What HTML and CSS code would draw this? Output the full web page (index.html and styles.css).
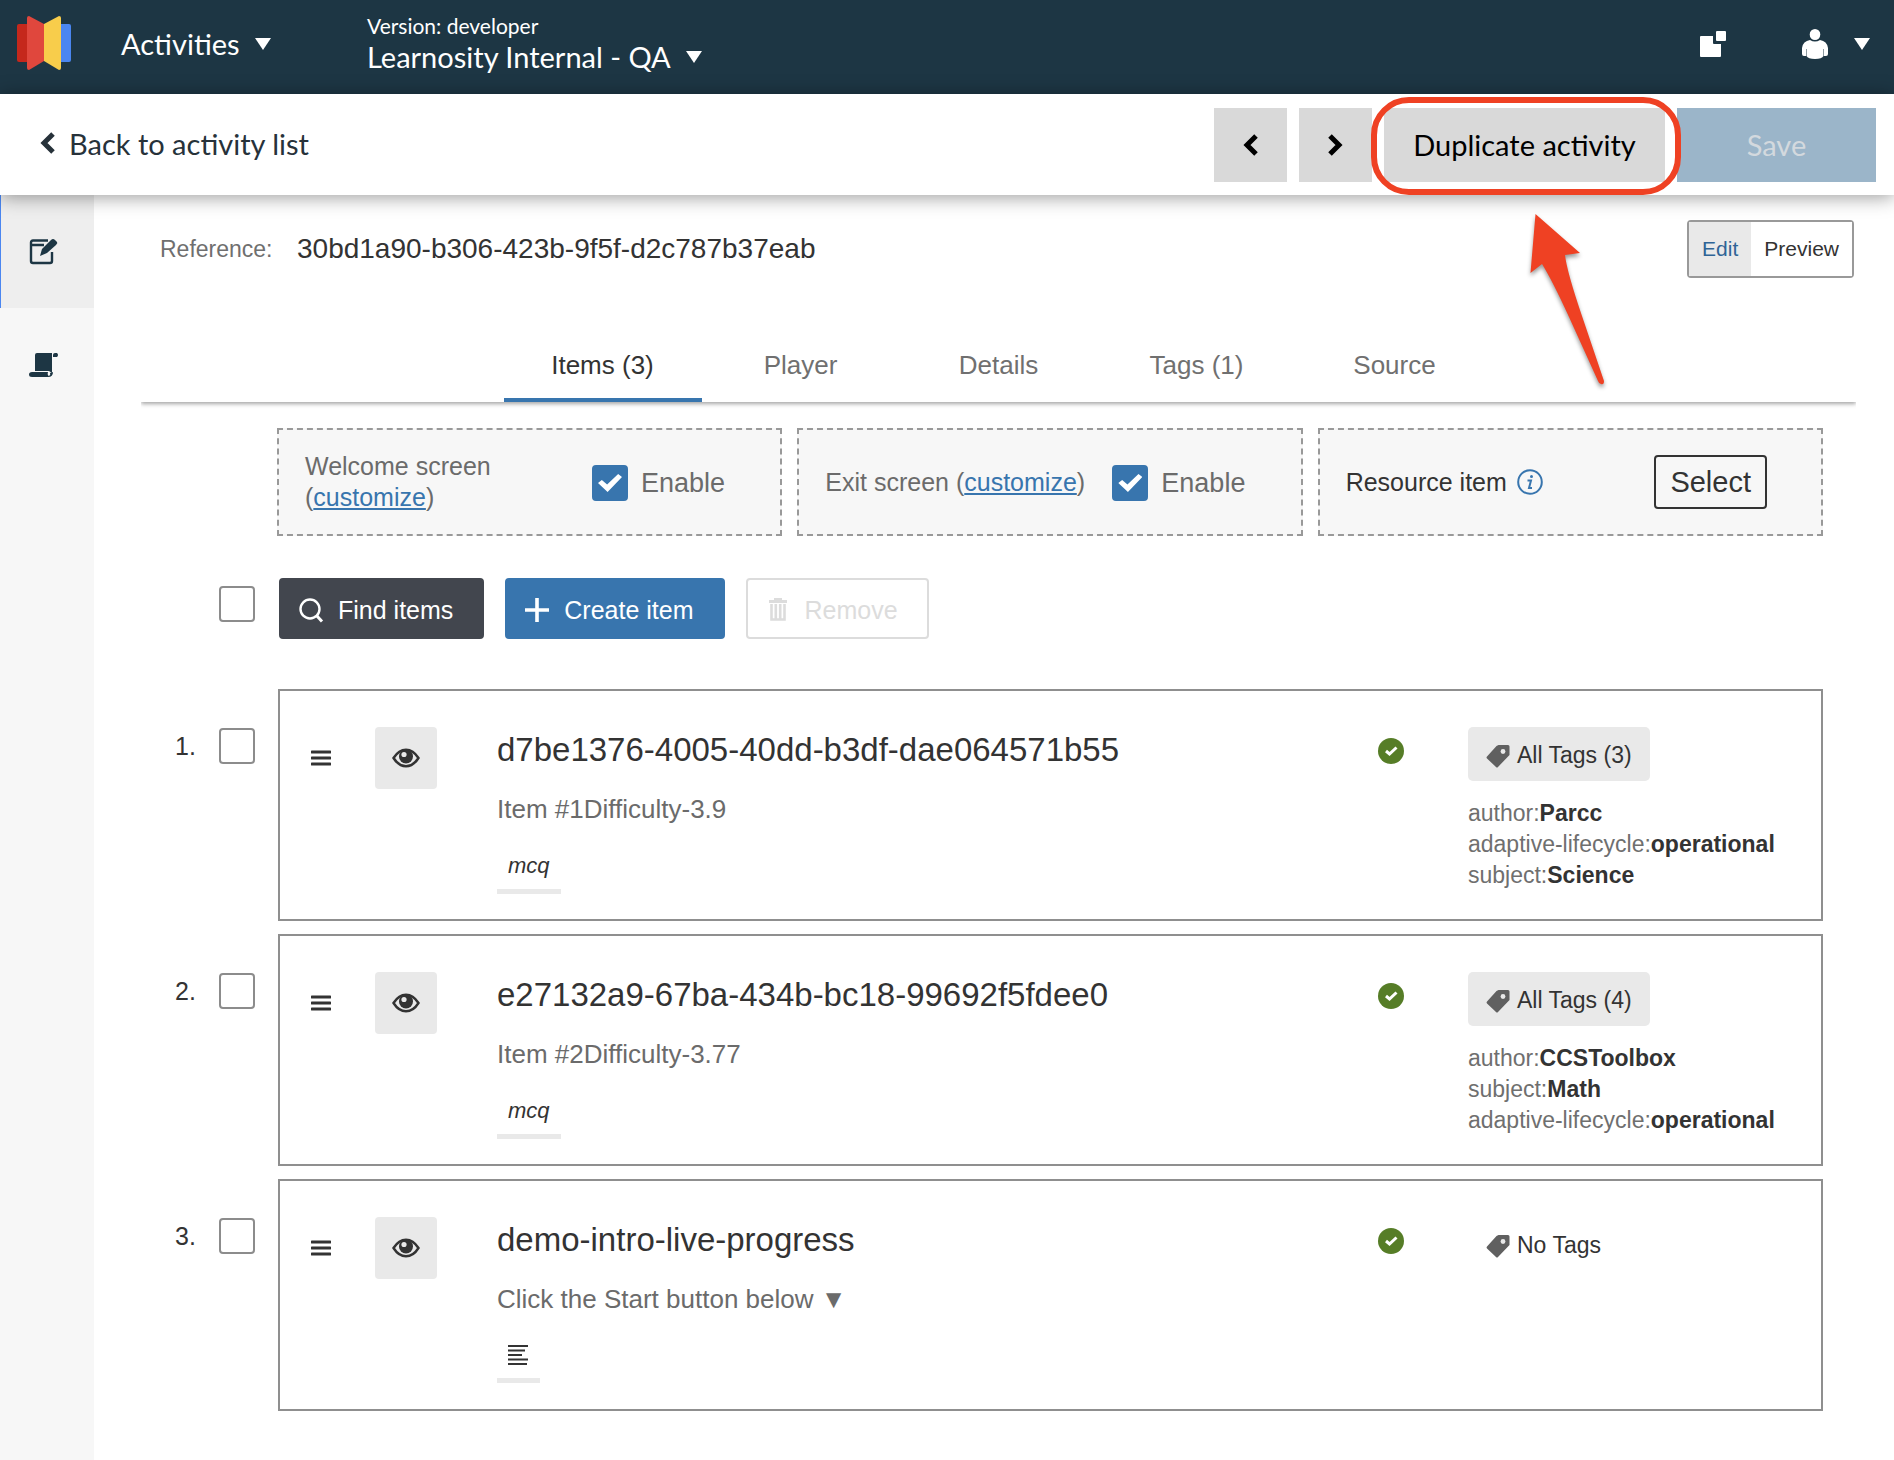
FILE: index.html
```html
<!DOCTYPE html>
<html lang="en">
<head>
  <meta charset="UTF-8">
  <title>Edit Activity</title>
  <link rel="stylesheet" href="styles.css">
</head>
<body>

  <!-- Shared icons -->
  <svg class="icon-defs" width="0" height="0">
    <symbol id="icon-eye" viewBox="0 0 28 20">
      <path d="M1.500 10C5 4.500 9 1.700 14 1.700S23 4.500 26.500 10C23 15.500 19 18.300 14 18.300S5 15.500 1.500 10Z" fill="none" stroke="#333" stroke-width="2.400"/>
      <circle cx="14" cy="8.500" r="7" fill="#333"/>
      <circle cx="12" cy="6.500" r="2.600" fill="#e9e9e9"/>
    </symbol>
    <symbol id="icon-tag" viewBox="0 0 24 24">
      <path d="M12.500 1H22Q23.500 1 23.500 2.500V11L12 23Q11 24 10 23L1 14.500Q0 13.500 1 12.500L10.500 2Z" fill="#606060"/>
      <circle cx="17" cy="7.500" r="2.400" fill="#e9e9e9"/>
    </symbol>
    <symbol id="icon-ok" viewBox="0 0 26 26">
      <circle cx="13" cy="13" r="13" fill="#567d27"/>
      <path d="M8 13L11.500 16L18.500 9.500" fill="none" stroke="#fff" stroke-width="3"/>
    </symbol>
    <symbol id="icon-drag" viewBox="0 0 20 16">
      <path d="M1 2H19M1 8H19M1 14H19" stroke="#333" stroke-width="3" stroke-linecap="round"/>
    </symbol>
    <symbol id="icon-caret" viewBox="0 0 16 12">
      <path d="M0 0H16L8 12Z" fill="#fff"/>
    </symbol>
  </svg>

  <header class="topbar">
    <svg class="logo" viewBox="0 0 54 54">
      <rect x="0" y="8" width="14" height="38" rx="2" fill="#c5281c"/>
      <rect x="40" y="8" width="14" height="38" rx="2" fill="#4a86f0"/>
      <path d="M10 2Q10 0 12 0L27 8V45L12 54Q10 54 10 52Z" fill="#e0473d"/>
      <path d="M44 2Q44 0 42 0L27 8V45L42 54Q44 54 44 52Z" fill="#f8cd4b"/>
    </svg>
    <button class="top-menu menu-section">Activities <svg class="caret"><use href="#icon-caret"/></svg></button>
    <div class="account">
      <span class="version">Version: developer</span>
      <button class="top-menu">Learnosity Internal - QA <svg class="caret"><use href="#icon-caret"/></svg></button>
    </div>
    <div class="top-right">
      <button class="top-menu" aria-label="Open">
        <svg width="26" height="26" viewBox="0 0 26 26" fill="#fff">
          <path d="M1 5H13V12Q13 13 14 13H21V25Q21 26 20 26H1Q0 26 0 25V6Q0 5 1 5Z"/>
          <rect x="16" y="0" width="10" height="10" rx="1"/>
        </svg>
      </button>
      <button class="top-menu" aria-label="User">
        <svg width="26" height="30" viewBox="0 0 26 30" fill="#fff">
          <ellipse cx="13" cy="5.500" rx="5.300" ry="5.500"/>
          <path d="M8 11Q13 14 18 11Q25 12 26 19V25Q26 27 24 27H22V20H21.500V27Q20 30 13 30T4.500 27V20H4V27H2Q0 27 0 25V19Q1 12 8 11Z"/>
        </svg>
        <svg class="caret"><use href="#icon-caret"/></svg>
      </button>
    </div>
  </header>

  <nav class="actionbar">
    <a href="#" class="back-link">
      <svg width="15" height="22" viewBox="0 0 15 22"><path d="M13 2L4 11L13 20" fill="none" stroke="#27323a" stroke-width="5"/></svg>
      Back to activity list
    </a>
    <div class="actions">
      <button class="action" aria-label="Previous"><svg width="15" height="22" viewBox="0 0 15 22"><path d="M13 2L4 11L13 20" fill="none" stroke="#000" stroke-width="5"/></svg></button>
      <button class="action" aria-label="Next"><svg width="15" height="22" viewBox="0 0 15 22"><path d="M2 2L11 11L2 20" fill="none" stroke="#000" stroke-width="5"/></svg></button>
      <div class="duplicate">
        <button class="action">Duplicate activity</button>
        <span class="ring"></span>
        <svg class="arrow" viewBox="0 0 80 180">
          <path d="M7.500 4L52 43L37 45Q39 62 54 106L76 171Q76 175 73 174Q71 174 70 171L41 107Q24 70 14 54L2.500 63Z" fill="#ef4123"/>
        </svg>
      </div>
      <button class="action save" disabled>Save</button>
    </div>
  </nav>

  <div class="layout">
    <aside class="sidebar">
      <a href="#" class="side-link active" aria-label="Edit">
        <svg width="30" height="28" viewBox="0 0 30 28">
          <path d="M19 2.500H4Q2 2.500 2 4.500V23Q2 25 4 25H21Q23 25 23 23V14M2 7H15" fill="none" stroke="#1d3644" stroke-width="2.400"/>
          <path d="M11 18L13 11L22 2Q24 0 26 2L28 4Q29 5 27 7L18 15Z" fill="#1d3644"/>
        </svg>
      </a>
      <a href="#" class="side-link" aria-label="History">
        <svg width="30" height="28" viewBox="0 0 30 28" fill="#1d3644">
          <path d="M8 2H23V22L20 20H6V4Q6 2 8 2Z"/>
          <path d="M3 21H19Q18 24 20 25Q22 24 21 22L24 21Q24 26 19 26H3Q0 26 0 23.500T3 21Z"/>
          <path d="M24 6V4Q24 2 26 2H28Q30 4 28 6Z"/>
        </svg>
      </a>
    </aside>

    <main class="content">
      <div class="reference-row">
        <span class="reference-label">Reference:</span>
        <span class="reference-value">30bd1a90-b306-423b-9f5f-d2c787b37eab</span>
        <div class="mode">
          <button class="active">Edit</button>
          <button>Preview</button>
        </div>
      </div>

      <nav class="tabs">
        <a href="#" class="tab active">Items (3)</a>
        <a href="#" class="tab">Player</a>
        <a href="#" class="tab">Details</a>
        <a href="#" class="tab">Tags (1)</a>
        <a href="#" class="tab">Source</a>
      </nav>

      <section class="panels">
        <div class="panel">
          <span class="panel-label">Welcome screen <span class="customize">(<a href="#">customize</a>)</span></span>
          <label class="enable"><input type="checkbox" class="checkbox" checked> Enable</label>
        </div>
        <div class="panel">
          <span class="panel-label">Exit screen <span class="customize">(<a href="#">customize</a>)</span></span>
          <label class="enable"><input type="checkbox" class="checkbox" checked> Enable</label>
        </div>
        <div class="panel resource">
          <span class="panel-label">Resource item
            <svg width="26" height="26" viewBox="0 0 26 26">
              <circle cx="13" cy="13" r="11.800" fill="none" stroke="#3875ae" stroke-width="2"/>
              <circle cx="14.500" cy="7.500" r="1.500" fill="#3875ae"/>
              <path d="M10.500 11.500H14L12 19H15" fill="none" stroke="#3875ae" stroke-width="2"/>
            </svg>
          </span>
          <button class="select-btn">Select</button>
        </div>
      </section>

      <div class="toolbar">
        <input type="checkbox" class="checkbox" aria-label="Select all items">
        <button class="btn dark">
          <svg width="26" height="26" viewBox="0 0 26 26" fill="none" stroke="#fff" stroke-width="2.400"><circle cx="12" cy="11" r="9.500"/><path d="M18.500 17.500L24 23.500" stroke-width="3"/></svg>
          Find items
        </button>
        <button class="btn blue">
          <svg width="26" height="26" viewBox="0 0 26 26" stroke="#fff" stroke-width="3.600"><path d="M13 0V24M1 12H25"/></svg>
          Create item
        </button>
        <button class="btn" disabled>
          <svg width="26" height="26" viewBox="0 0 26 26" fill="none" stroke="#dcdcdc"><path d="M4 3.500H22" stroke-width="3"/><path d="M10 2.500V1H16V2.500" stroke-width="2"/><path d="M6.500 6V21.500H19.500V6M10.800 6V21M15.200 6V21" stroke-width="2.600"/></svg>
          Remove
        </button>
      </div>

      <ul class="items">
        <li class="item">
          <span class="number">1.</span>
          <input type="checkbox" class="checkbox" aria-label="Select item 1">
          <article class="card">
            <svg class="drag"><use href="#icon-drag"/></svg>
            <button class="view" aria-label="View item"><svg width="28" height="20"><use href="#icon-eye"/></svg></button>
            <div class="info">
              <h2>d7be1376-4005-40dd-b3df-dae064571b55</h2>
              <p>Item #1Difficulty-3.9</p>
              <span class="type"><em>mcq</em></span>
            </div>
            <svg class="status"><use href="#icon-ok"/></svg>
            <div class="tags">
              <button class="all-tags"><svg width="24" height="24"><use href="#icon-tag"/></svg> All Tags (3)</button>
              <div>author:<b>Parcc</b></div>
              <div>adaptive-lifecycle:<b>operational</b></div>
              <div>subject:<b>Science</b></div>
            </div>
          </article>
        </li>
        <li class="item">
          <span class="number">2.</span>
          <input type="checkbox" class="checkbox" aria-label="Select item 2">
          <article class="card">
            <svg class="drag"><use href="#icon-drag"/></svg>
            <button class="view" aria-label="View item"><svg width="28" height="20"><use href="#icon-eye"/></svg></button>
            <div class="info">
              <h2>e27132a9-67ba-434b-bc18-99692f5fdee0</h2>
              <p>Item #2Difficulty-3.77</p>
              <span class="type"><em>mcq</em></span>
            </div>
            <svg class="status"><use href="#icon-ok"/></svg>
            <div class="tags">
              <button class="all-tags"><svg width="24" height="24"><use href="#icon-tag"/></svg> All Tags (4)</button>
              <div>author:<b>CCSToolbox</b></div>
              <div>subject:<b>Math</b></div>
              <div>adaptive-lifecycle:<b>operational</b></div>
            </div>
          </article>
        </li>
        <li class="item">
          <span class="number">3.</span>
          <input type="checkbox" class="checkbox" aria-label="Select item 3">
          <article class="card">
            <svg class="drag"><use href="#icon-drag"/></svg>
            <button class="view" aria-label="View item"><svg width="28" height="20"><use href="#icon-eye"/></svg></button>
            <div class="info">
              <h2>demo-intro-live-progress</h2>
              <p>Click the Start button below ▼</p>
              <span class="type">
                <svg width="21" height="22" viewBox="0 0 21 22" stroke="#333" stroke-width="2"><path d="M0 2H20M0 6.500H17M0 11H14M0 15.500H20M0 20H19"/></svg>
              </span>
            </div>
            <svg class="status"><use href="#icon-ok"/></svg>
            <div class="tags">
              <button class="all-tags empty"><svg width="24" height="24"><use href="#icon-tag"/></svg> No Tags</button>
            </div>
          </article>
        </li>
      </ul>
    </main>
  </div>

</body>
</html>
```
FILE: styles.css
```css
* {
  box-sizing: border-box;
}

body {
  margin: 0;
  background: #fff;
  color: #333;
  font-family: "Liberation Sans", "DejaVu Sans", Arial, sans-serif;
  font-size: 25px;
}

button {
  font: inherit;
  color: inherit;
  cursor: pointer;
}

a {
  color: #3875ae;
}

svg {
  flex-shrink: 0;
}

.icon-defs {
  position: absolute;
}

/* Top bar */
.topbar {
  display: flex;
  align-items: center;
  height: 94px;
  padding: 0 24px 0 17px;
  background: #1d3644;
  color: #fff;
  font-family: Lato, sans-serif;
}

.logo {
  width: 54px;
  height: 54px;
  margin-bottom: 8px;
}

.top-menu {
  display: flex;
  align-items: center;
  gap: 15px;
  padding: 0;
  border: none;
  background: none;
  font-size: 29px;
  line-height: 34px;
}

.menu-section {
  width: 246px;
  margin: 0 0 7px 50px;
}

.caret {
  width: 16px;
  height: 12px;
}

.account {
  padding-bottom: 9px;
}

.version {
  display: block;
  font-size: 21px;
  line-height: 28px;
}

.top-right {
  display: flex;
  align-items: center;
  gap: 76px;
  margin-left: auto;
  padding-bottom: 7px;
}

.top-right .top-menu {
  gap: 26px;
}

/* Action bar */
.actionbar {
  position: relative;
  z-index: 1;
  display: flex;
  justify-content: space-between;
  align-items: center;
  height: 101px;
  padding: 0 18px 0 40px;
  background: #fff;
  box-shadow: 0 2px 18px rgba(0, 0, 0, 0.4);
  font-family: Lato, sans-serif;
  font-size: 29px;
}

.back-link {
  display: flex;
  align-items: center;
  gap: 14px;
  padding-bottom: 3px;
  color: #27323a;
  text-decoration: none;
}

.actions {
  display: flex;
  gap: 12px;
}

.action {
  height: 74px;
  min-width: 73px;
  padding: 0 29px;
  border: none;
  background: #d9d9d9;
  color: #000;
}

.action.save {
  width: 199px;
  background: #9bb5c9;
  color: #d3d9de;
}

.duplicate {
  position: relative;
}

.duplicate .action {
  width: 281px;
}

.ring {
  position: absolute;
  inset: -11px -16px -13px -13px;
  border: 6px solid #ef4123;
  border-radius: 38px;
}

.arrow {
  position: absolute;
  left: 144px;
  top: 102px;
  width: 80px;
  height: 180px;
  filter: drop-shadow(0 3px 2px rgba(0, 0, 0, 0.4));
}

/* Page layout */
.layout {
  display: flex;
  min-height: calc(100vh - 195px);
}

.sidebar {
  width: 94px;
  flex-shrink: 0;
  background: #f7f7f7;
}

.side-link {
  display: flex;
  align-items: center;
  height: 113px;
  padding-left: 29px;
}

.side-link.active {
  background: #eee;
  box-shadow: inset 1px 0 #4a86f0;
}

.content {
  flex: 1;
  padding: 25px 38px 40px 47px;
}

.reference-row {
  display: flex;
  align-items: center;
  padding: 0 2px 0 19px;
}

.reference-label {
  width: 137px;
  color: #6f6f6f;
  font-size: 23px;
}

.reference-value {
  font-size: 28px;
}

.mode {
  display: flex;
  margin-left: auto;
  border: 2px solid #999;
  border-radius: 4px;
}

.mode button {
  height: 54px;
  padding: 0 13px;
  border: none;
  background: #fff;
  font-size: 21px;
}

.mode button.active {
  background: #e9e9e9;
  color: #2f6496;
}

/* Tabs */
.tabs {
  display: flex;
  justify-content: center;
  margin-top: 53px;
  box-shadow: 0 2px 4px rgba(0, 0, 0, 0.35);
  clip-path: inset(0 0 -8px 0);
}

.tab {
  width: 198px;
  height: 71px;
  border-bottom: 4px solid transparent;
  color: #707070;
  font-size: 26px;
  line-height: 68px;
  text-align: center;
  text-decoration: none;
}

.tab.active {
  border-color: #3875ae;
  color: #333;
}

/* Start, end and resource panels */
.panels {
  display: grid;
  grid-template-columns: repeat(3, 1fr);
  gap: 15px;
  margin: 26px 33px 0 136px;
}

.panel {
  display: flex;
  align-items: center;
  height: 108px;
  padding: 0 26px;
  border: 2px dashed #999;
  background: #f7f7f7;
  color: #6b6b6b;
}

.panel-label {
  width: 287px;
  line-height: 31px;
}

.customize {
  display: inline-block;
}

.enable {
  display: flex;
  align-items: center;
  gap: 13px;
  padding-top: 2px;
  font-size: 27px;
}

.panel.resource {
  justify-content: space-between;
  padding-right: 54px;
  color: #333;
}

.resource .panel-label {
  display: flex;
  align-items: center;
  gap: 10px;
}

.select-btn {
  height: 54px;
  padding: 0 14px;
  border: 2px solid #333;
  border-radius: 4px;
  background: none;
  font-size: 29px;
}

.checkbox {
  appearance: none;
  display: grid;
  place-items: center;
  flex-shrink: 0;
  width: 36px;
  height: 36px;
  margin: 0;
  border: 2px solid #8c8c8c;
  border-radius: 4px;
  background: #fff;
}

.checkbox:checked {
  border-color: #3875ae;
  background: #3875ae;
}

.checkbox:checked::before {
  content: "";
  width: 24px;
  height: 18px;
  background: #fff;
  clip-path: polygon(0 50%, 16% 34%, 38% 58%, 84% 0, 100% 16%, 40% 100%);
}

/* Toolbar */
.toolbar {
  display: flex;
  align-items: flex-start;
  margin: 42px 0 50px 78px;
}

.toolbar .checkbox {
  margin: 8px 24px 0 0;
}

.btn {
  display: flex;
  align-items: center;
  gap: 14px;
  height: 61px;
  margin-right: 21px;
  padding: 4px 29px 0 17px;
  border: 2px solid #dcdcdc;
  border-radius: 4px;
  background: #fff;
}

.btn:disabled {
  color: #dcdcdc;
  cursor: not-allowed;
}

.btn.dark {
  border-color: #42464e;
  background: #42464e;
  color: #fff;
}

.btn.blue {
  border-color: #3875ae;
  background: #3875ae;
  color: #fff;
}

/* Items */
.items {
  display: flex;
  flex-direction: column;
  gap: 13px;
  margin: 0;
  padding: 0 33px 0 34px;
  list-style: none;
}

.item {
  display: flex;
}

.number {
  width: 44px;
  padding-top: 42px;
  line-height: 30px;
}

.item > .checkbox {
  margin: 39px 23px 0 0;
}

.card {
  display: flex;
  align-items: flex-start;
  flex: 1;
  min-height: 232px;
  padding: 36px 0 0 31px;
  border: 2px solid #8f8f8f;
}

.drag {
  width: 20px;
  height: 16px;
  margin-top: 23px;
}

.view {
  display: grid;
  place-items: center;
  width: 62px;
  height: 62px;
  margin: 0 60px 0 44px;
  padding: 0;
  border: none;
  border-radius: 4px;
  background: #e9e9e9;
}

.info {
  flex: 1;
}

.info h2 {
  margin: 0;
  font-size: 33px;
  font-weight: normal;
  line-height: 46px;
}

.info p {
  margin: 21px 0 26px;
  color: #6b6b6b;
  font-size: 26px;
  line-height: 30px;
}

.type {
  display: inline-flex;
  align-items: center;
  height: 43px;
  padding: 0 11px 8px;
  border-bottom: 5px solid #e9e9e9;
  font-size: 22px;
}

.status {
  width: 26px;
  height: 26px;
  margin: 11px 64px 0 0;
}

.tags {
  width: 353px;
  color: #6f6f6f;
  font-size: 23px;
  line-height: 31px;
}

.tags b {
  color: #333;
}

.all-tags {
  display: flex;
  align-items: center;
  gap: 7px;
  height: 54px;
  margin-bottom: 17px;
  padding: 3px 18px 0;
  border: none;
  border-radius: 5px;
  background: #e9e9e9;
  color: #333;
}

.all-tags.empty {
  background: none;
}
```
